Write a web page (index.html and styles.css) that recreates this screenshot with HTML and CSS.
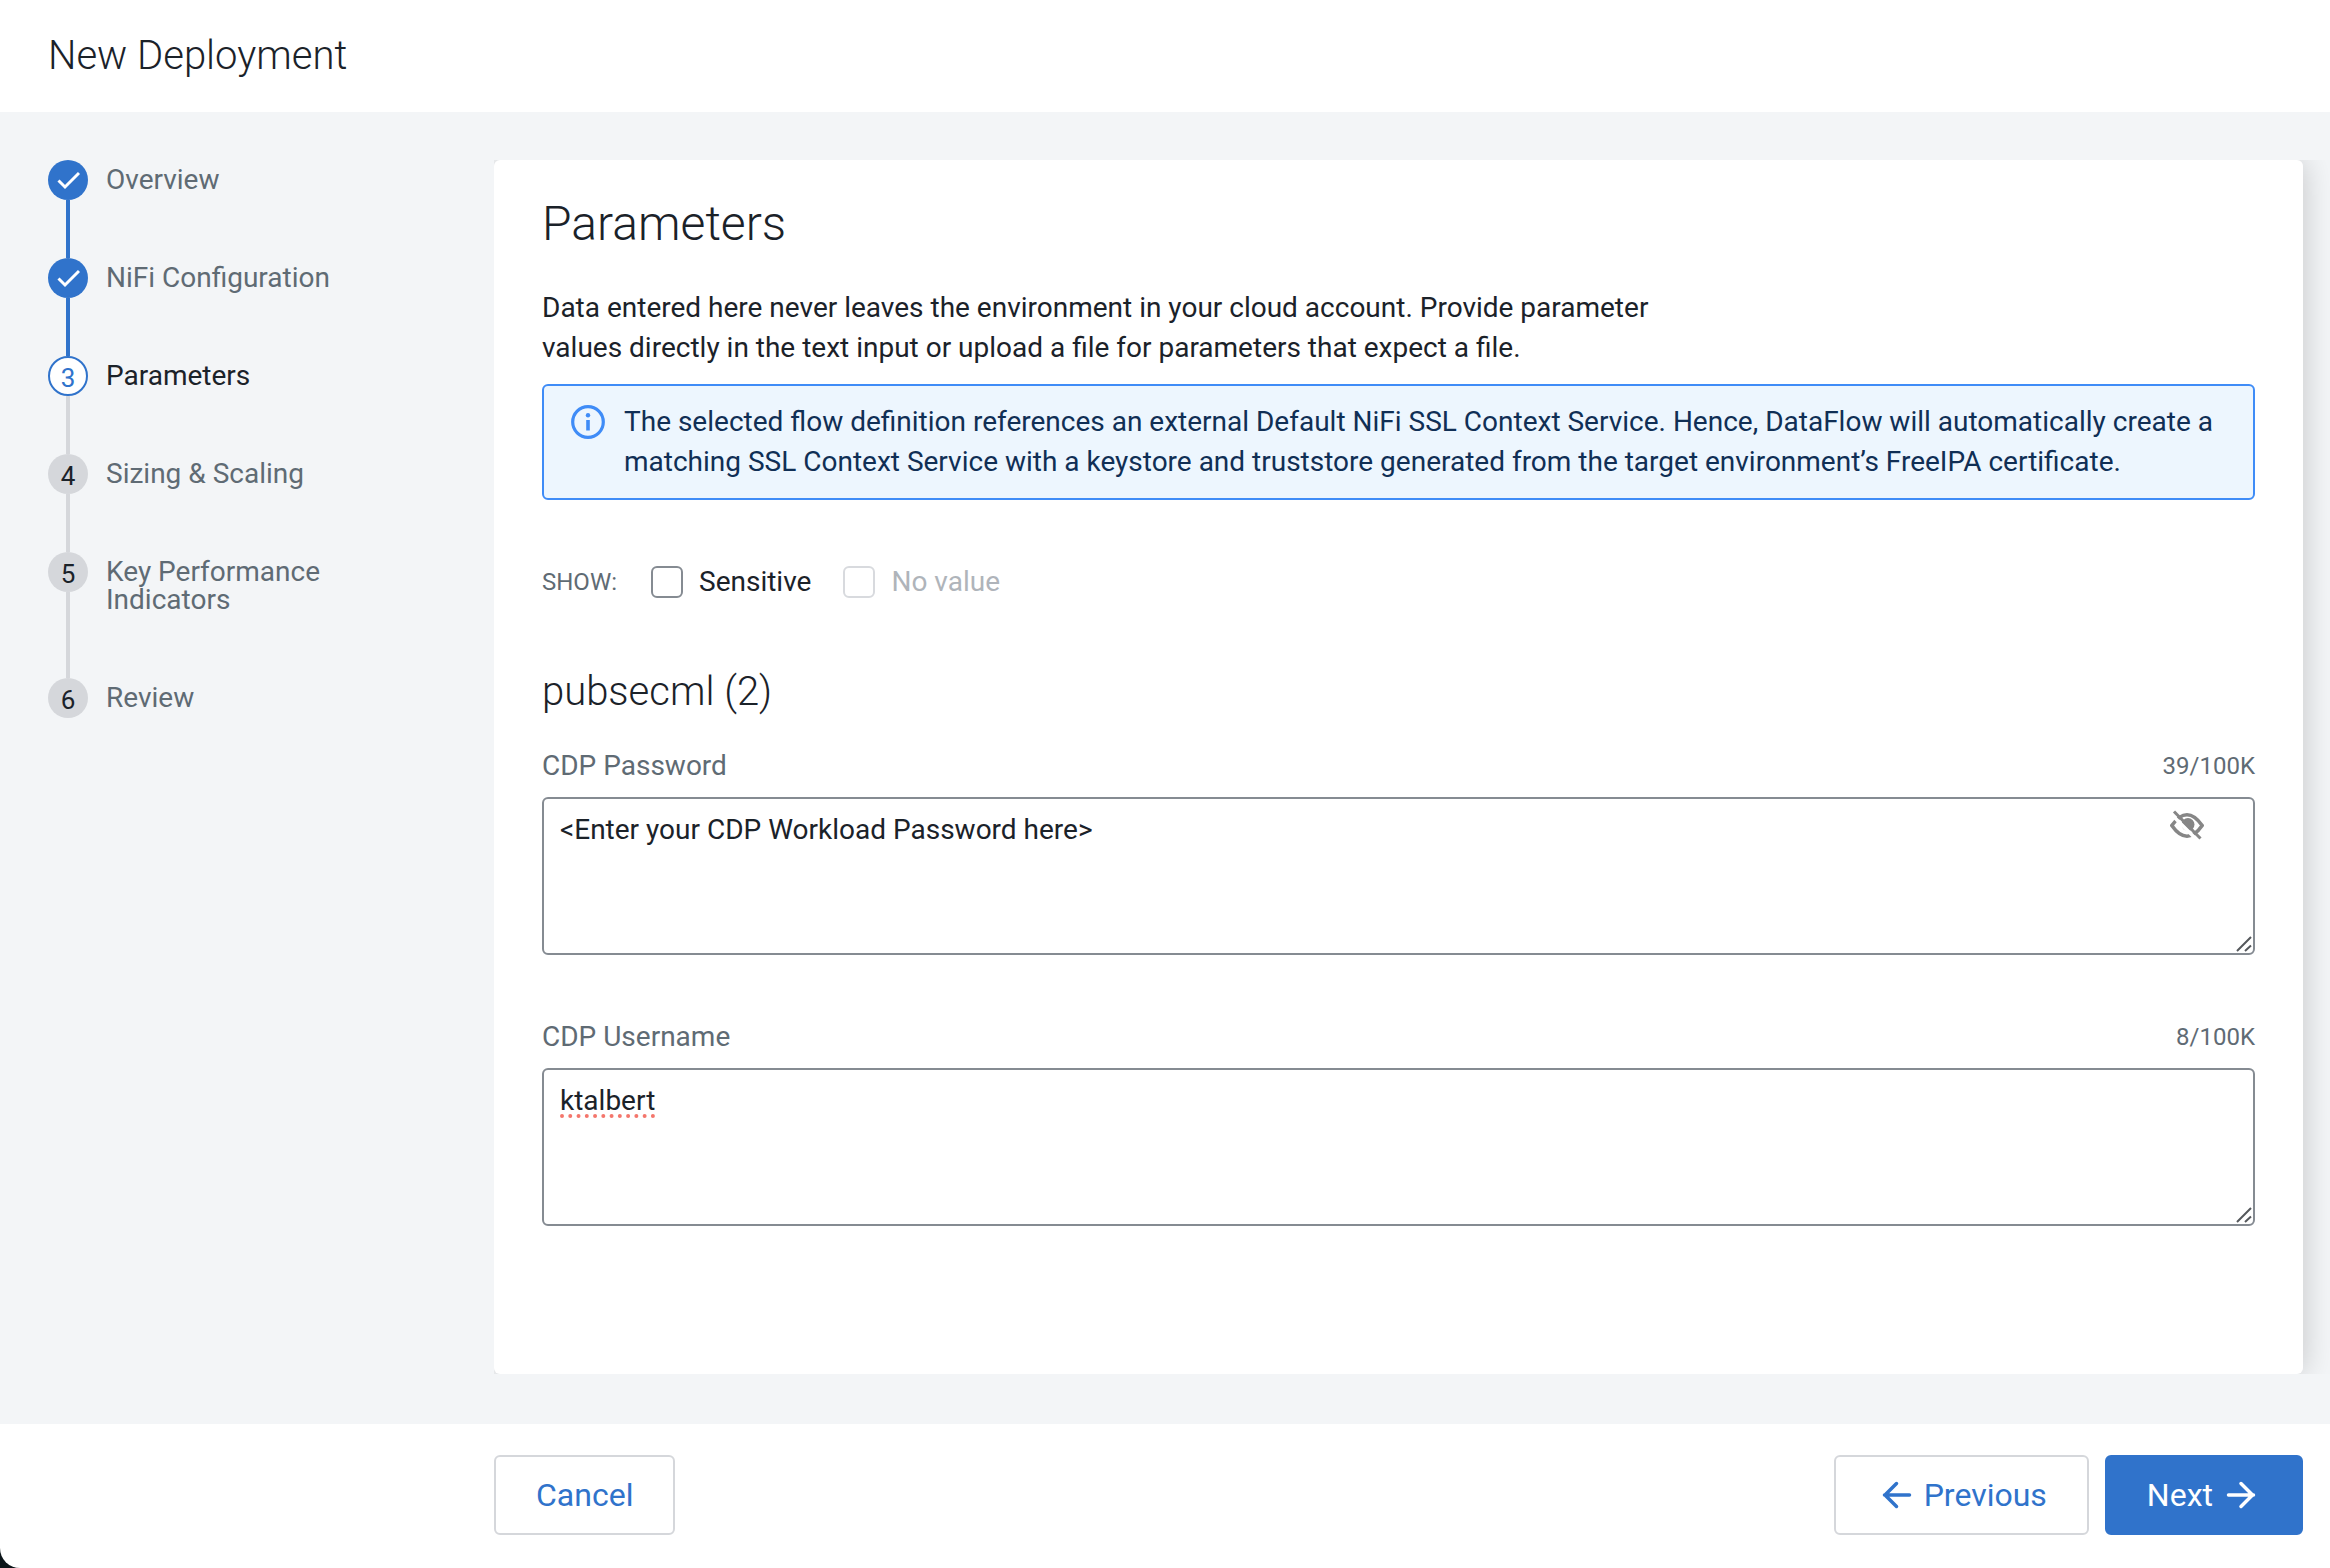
FILE: index.html
```html
<!DOCTYPE html>
<html lang="en">
<head>
<meta charset="utf-8">
<title>New Deployment</title>
<link rel="stylesheet" href="styles.css">
</head>
<body>
<div class="window">
  <header class="header">
    <h1 class="title">New Deployment</h1>
  </header>

  <div class="body">
    <nav class="sidebar" aria-label="Deployment steps">
      <ol class="steps">
        <li class="step done">
          <span class="marker"><svg class="check" viewBox="0 0 24 24" aria-hidden="true"><path d="M2.500 12.500 9 19 23 5"/></svg></span>
          <span class="step-name">Overview</span>
        </li>
        <li class="step done">
          <span class="marker"><svg class="check" viewBox="0 0 24 24" aria-hidden="true"><path d="M2.500 12.500 9 19 23 5"/></svg></span>
          <span class="step-name">NiFi Configuration</span>
        </li>
        <li class="step current" aria-current="step">
          <span class="marker">3</span>
          <span class="step-name">Parameters</span>
        </li>
        <li class="step">
          <span class="marker">4</span>
          <span class="step-name">Sizing &amp; Scaling</span>
        </li>
        <li class="step">
          <span class="marker">5</span>
          <span class="step-name">Key Performance Indicators</span>
        </li>
        <li class="step">
          <span class="marker">6</span>
          <span class="step-name">Review</span>
        </li>
      </ol>
    </nav>

    <div class="viewport">
      <main class="panel">
        <h2 class="heading">Parameters</h2>
        <p class="intro">Data entered here never leaves the environment in your cloud account. Provide parameter values directly in the text input or upload a file for parameters that expect a file.</p>

        <div class="notice" role="note">
          <svg class="notice-icon" viewBox="0 0 34 34" aria-hidden="true">
            <circle cx="17" cy="17" r="15.300" fill="none" stroke="currentColor" stroke-width="3.200"/>
            <path d="M17 15v10.500" stroke="currentColor" stroke-width="3.600"/>
            <circle cx="17" cy="10.300" r="2.200" fill="currentColor"/>
          </svg>
          <p class="notice-text">The selected flow definition references an external Default NiFi SSL Context Service. Hence, DataFlow will automatically create a matching SSL Context Service with a keystore and truststore generated from the target environment’s FreeIPA certificate.</p>
        </div>

        <div class="filters">
          <span class="filters-title">SHOW:</span>
          <div class="filters-options">
            <label class="filter"><input class="box" type="checkbox">Sensitive</label>
            <label class="filter disabled"><input class="box" type="checkbox" disabled>No value</label>
          </div>
        </div>

        <h3 class="group">pubsecml (2)</h3>

        <div class="field">
          <div class="field-head">
            <label for="password">CDP Password</label>
            <span class="count">39/100K</span>
          </div>
          <div class="field-box">
            <textarea class="input" id="password" spellcheck="false">&lt;Enter your CDP Workload Password here&gt;</textarea>
            <button class="reveal" type="button" aria-label="Toggle visibility">
              <svg viewBox="0 0 34 30" aria-hidden="true">
                <path d="M1.800 15.500Q17-6 32.200 15.500Q17 37 1.800 15.500Z" fill="none" stroke="currentColor" stroke-width="3.600"/>
                <circle cx="18" cy="14.500" r="6.500" fill="currentColor"/>
                <path d="M1 4 27 30" stroke="#fff" stroke-width="3.500"/>
                <path d="M4 1.500 30.500 28.500" stroke="currentColor" stroke-width="3"/>
              </svg>
            </button>
            <svg class="grip" viewBox="0 0 16 16" aria-hidden="true"><path d="M1 15 15 1M9 15 15 9.500"/></svg>
          </div>
        </div>

        <div class="field">
          <div class="field-head">
            <label for="username">CDP Username</label>
            <span class="count">8/100K</span>
          </div>
          <div class="field-box">
            <textarea class="input misspelled" id="username" spellcheck="false">ktalbert</textarea>
            <svg class="grip" viewBox="0 0 16 16" aria-hidden="true"><path d="M1 15 15 1M9 15 15 9.500"/></svg>
          </div>
        </div>
      </main>
    </div>
  </div>

  <footer class="footer">
    <button class="btn" type="button">Cancel</button>
    <div class="pager">
      <button class="btn" type="button">
        <svg class="arrow" viewBox="0 0 40 40" aria-hidden="true"><path d="M33.500 20H8.500M20.500 8.500 9 20l11.500 11.500"/></svg>
        Previous
      </button>
      <button class="btn primary" type="button">
        Next
        <svg class="arrow" viewBox="0 0 40 40" aria-hidden="true"><path d="M7.500 20H32.500M20 8.500 31.500 20 20 31.500"/></svg>
      </button>
    </div>
  </footer>
</div>
</body>
</html>
```
FILE: styles.css
```css
* {
  box-sizing: border-box;
}

body {
  margin: 0;
  background: #0c1519;
  color: #1b2229;
  font: 400 28px/40px Roboto, sans-serif;
}

h1, h2, h3, p, ol {
  margin: 0;
  padding: 0;
}

button, textarea {
  font: inherit;
}

.window {
  display: flex;
  flex-direction: column;
  min-height: 100vh;
  overflow: hidden;
  background: #fff;
  border-bottom-left-radius: 20px;
}

.header {
  padding: 32px 48px;
}

.title {
  font-size: 40px;
  font-weight: 300;
  line-height: 48px;
}

.body {
  display: flex;
  flex: 1;
  padding: 48px 0 50px 48px;
  background: #f3f5f7;
}

/* Step list */

.sidebar {
  flex: none;
  width: 446px;
}

.steps {
  list-style: none;
}

.step {
  position: relative;
  display: flex;
  gap: 18px;
  padding-bottom: 58px;
  color: #5f6b74;
  line-height: 28px;
}

.step:not(:last-child)::after {
  content: "";
  position: absolute;
  top: 40px;
  bottom: 0;
  left: 18px;
  width: 4px;
  background: #d5d7db;
}

.step.done::after {
  background: #3073cb;
}

.marker {
  display: grid;
  flex: none;
  place-items: center;
  width: 40px;
  height: 40px;
  padding-top: 4px;
  border-radius: 50%;
  background: #d5d7db;
  color: #1b2229;
  font-size: 26px;
}

.done .marker {
  padding: 0;
  background: #3073cb;
}

.current .marker {
  border: 2px solid #3073cb;
  background: #fff;
  color: #3073cb;
}

.check {
  width: 24px;
  height: 24px;
  fill: none;
  stroke: #fff;
  stroke-width: 3;
}

.step-name {
  width: 240px;
  padding: 6px 0;
}

.current .step-name {
  color: #1b2229;
}

/* Form panel */

.viewport {
  display: flex;
  flex: 1;
  padding-right: 27px;
  overflow: hidden;
}

.panel {
  flex: 1;
  padding: 32px 48px;
  border-radius: 6px;
  background: #fff;
  box-shadow: 0 0 32px rgba(0, 0, 0, 0.2);
  clip-path: inset(0 -40px 0 0);
}

.heading {
  margin-bottom: 32px;
  font-size: 48px;
  font-weight: 300;
  line-height: 64px;
}

.intro {
  max-width: 1120px;
  margin-bottom: 16px;
}

.notice {
  display: flex;
  gap: 19px;
  padding: 16px 27px;
  border: 2px solid #3f8cf7;
  border-radius: 6px;
  background: #edf6fe;
  color: #102f55;
}

.notice-icon {
  flex: none;
  width: 34px;
  height: 34px;
  margin-top: 3px;
  color: #3f8cf7;
}

.filters {
  display: flex;
  align-items: center;
  gap: 34px;
  margin: 62px 0 66px;
}

.filters-title {
  color: #5f6b74;
  font-size: 24px;
}

.filters-options {
  display: flex;
  gap: 32px;
}

.filter {
  display: flex;
  align-items: center;
  gap: 16px;
}

.filter.disabled {
  color: #afb4ba;
}

.box {
  width: 32px;
  height: 32px;
  margin: 0;
  appearance: none;
  border: 2px solid #858b92;
  border-radius: 6px;
  background: #fff;
}

.disabled .box {
  border-color: #d8dade;
}

.group {
  margin-bottom: 30px;
  font-size: 40px;
  font-weight: 300;
  line-height: 48px;
}

.field {
  margin-bottom: 62px;
}

.field-head {
  display: flex;
  align-items: center;
  justify-content: space-between;
  margin-bottom: 11px;
  color: #5f6b74;
}

.count {
  font-size: 24px;
}

.field-box {
  position: relative;
  display: flex;
}

.input {
  flex: 1;
  height: 158px;
  padding: 11px 16px;
  border: 2px solid #858b92;
  border-radius: 6px;
  background: #fff;
  color: #1b2229;
  resize: none;
}

.input.misspelled {
  text-decoration: underline dotted #f4766c 4px;
  text-decoration-skip-ink: none;
  text-underline-offset: 4px;
}

.reveal {
  position: absolute;
  top: 13px;
  right: 51px;
  width: 34px;
  height: 30px;
  padding: 0;
  border: 0;
  background: none;
  color: #868686;
}

.reveal svg {
  display: block;
}

.grip {
  position: absolute;
  right: 3px;
  bottom: 3px;
  width: 16px;
  height: 16px;
  fill: none;
  stroke: #55585c;
  stroke-width: 2;
}

/* Actions */

.footer {
  display: flex;
  justify-content: space-between;
  padding: 31px 27px 33px 494px;
}

.pager {
  display: flex;
  gap: 16px;
}

.btn {
  display: flex;
  align-items: center;
  gap: 8px;
  height: 80px;
  padding: 0 40px;
  border: 2px solid #d5d7db;
  border-radius: 6px;
  background: #fff;
  color: #3073cb;
  font-size: 32px;
}

.btn.primary {
  border-color: #3073cb;
  background: #3073cb;
  color: #fff;
}

.arrow {
  width: 40px;
  height: 40px;
  fill: none;
  stroke: currentColor;
  stroke-width: 3.5;
  stroke-linecap: round;
}
```
